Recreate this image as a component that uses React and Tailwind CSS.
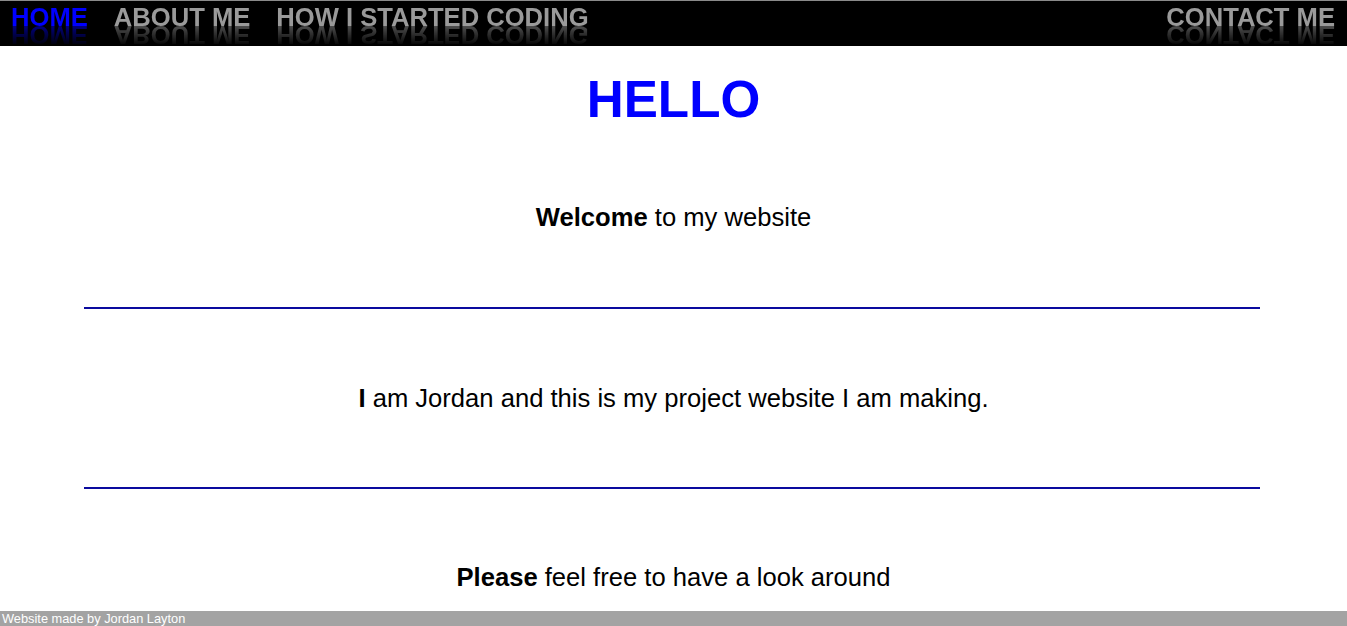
const navLinks = [
  { label: 'HOME', active: true },
  { label: 'ABOUT ME' },
  { label: 'HOW I STARTED CODING' },
]

function NavItem({ label, active }) {
  return (
    <a
      href="#"
      className={`font-bold text-[25.6px] leading-[1.15] [-webkit-box-reflect:below_-12px_linear-gradient(transparent_10%,rgba(255,255,255,0.65))] ${
        active ? 'text-[#0000ff]' : 'text-[#9a9a9a]'
      }`}
    >
      {label}
    </a>
  )
}

function Rule() {
  return <div className="ml-[84px] h-[2px] w-[1176px] bg-[#0a0a9e]" />
}

export default function App() {
  return (
    <div className="flex min-h-screen flex-col bg-white font-['Liberation_Sans',Arial,sans-serif] text-black">
      <nav className="flex h-[46px] items-start justify-between border-t border-[#8a8a8a] bg-black pl-[11px] pr-[12px] pt-[2px]">
        <div className="flex gap-[26px]">
          {navLinks.map(item => (
            <NavItem key={item.label} {...item} />
          ))}
        </div>
        <NavItem label="CONTACT ME" />
      </nav>

      <main className="flex flex-col text-center">
        <h1 className="mt-[25px] text-[51.2px] font-bold leading-[1.15] text-[#0000ff]">HELLO</h1>

        <p className="mt-[73px] text-[25.6px] leading-[1.15]">
          <b>Welcome</b> to my website
        </p>

        <div className="mt-[75px]"><Rule /></div>

        <p className="mt-[75px] text-[25.6px] leading-[1.15]">
          <b>I</b> am Jordan and this is my project website I am making.
        </p>

        <div className="mt-[73px]"><Rule /></div>

        <p className="mt-[74px] text-[25.6px] leading-[1.15]">
          <b>Please</b> feel free to have a look around
        </p>
      </main>

      <footer className="mt-auto h-[15px] bg-[#a3a3a3] pl-[2px] text-[12.8px] leading-[15px] text-white">
        Website made by Jordan Layton
      </footer>
    </div>
  )
}
